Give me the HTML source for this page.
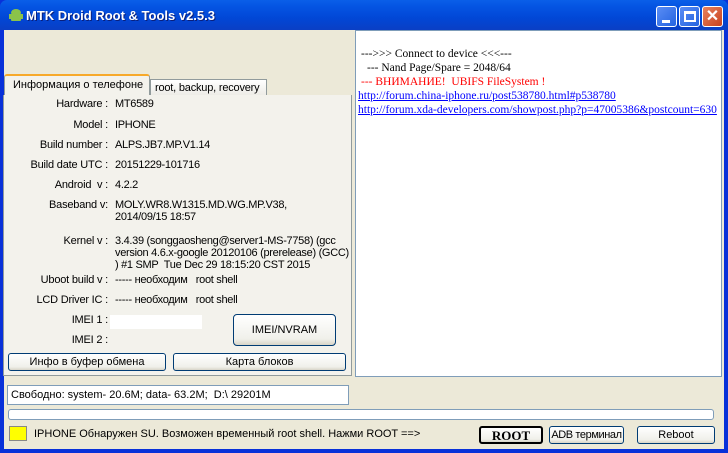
<!DOCTYPE html>
<html><head><meta charset="utf-8"><style>
*{margin:0;padding:0;box-sizing:border-box}
body{width:728px;height:453px;overflow:hidden;background:#0831d9;font-family:"Liberation Sans",sans-serif;font-size:11px;color:#000;position:relative}
.abs{position:absolute}
#title{left:0;top:0;width:728px;height:30px;background:linear-gradient(#0a5fe8,#0555e3 20%,#0147d6 60%,#0a3fc4);border-radius:7px 7px 0 0}
#client{left:4px;top:30px;width:720px;height:419px;background:#ECE9D8}
.tb{top:6px;width:21px;height:21px;border:1px solid #fff;border-radius:3px;background:linear-gradient(135deg,#5a8df5,#2463e0)}
.lbl{position:absolute;width:104px;text-align:right;left:0;white-space:nowrap;letter-spacing:-0.2px}
.val{position:absolute;left:111px;line-height:12px;white-space:nowrap;letter-spacing:-0.3px}
.btn{position:absolute;border:1px solid #003c74;border-radius:3px;background:linear-gradient(#fff,#f0f0ea 80%,#d8d5c8);text-align:center;font-size:11px;white-space:nowrap}
a{color:#00f}
</style></head><body>
<div id="title" class="abs"></div>
<div class="abs" style="left:8px;top:7px;width:16px;height:16px"><svg width="16" height="16"><rect x="3" y="6" width="10" height="8" rx="1" fill="#8bc34a"/><path d="M3 6a5 4 0 0 1 10 0z" fill="#8bc34a"/><rect x="1" y="7" width="2" height="5" fill="#8bc34a"/><rect x="13" y="7" width="2" height="5" fill="#8bc34a"/></svg></div>
<div class="abs" style="left:26px;top:8px;color:#fff;font-weight:bold;font-size:13px;text-shadow:1px 1px #0a1f7a">MTK Droid Root &amp; Tools v2.5.3</div>
<div class="abs tb" style="left:656px"><div class="abs" style="left:5px;top:13px;width:8px;height:3px;background:#fff"></div></div>
<div class="abs tb" style="left:679px"><div class="abs" style="left:4px;top:4px;width:12px;height:11px;border:2px solid #fff;border-top-width:3px"></div></div>
<div class="abs tb" style="left:702px;background:linear-gradient(135deg,#e8825e,#c8421e);color:#fff;font-size:16px;font-weight:bold;text-align:center;line-height:19px">✕</div>
<div id="client" class="abs"></div>
<div class="abs" style="left:4px;top:74px;width:146px;height:22px;background:#f3f2ec;border:1px solid #919b9c;border-bottom:none;border-top:2px solid #f7a92a;border-radius:3px 3px 0 0;padding:3px 0 0 8px;font-size:11px;white-space:nowrap">Информация о телефоне</div>
<div class="abs" style="left:150px;top:79px;width:117px;height:17px;background:linear-gradient(#fff,#ecebe5);border:1px solid #919b9c;border-bottom:none;padding:2px 0 0 4px;white-space:nowrap;letter-spacing:-0.2px">root, backup, recovery</div>
<div class="abs" style="left:3px;top:95px;width:349px;height:281px;background:#f3f2ec;border:1px solid #919b9c;border-top:none"></div>
<div class="abs" style="left:110px;top:315px;width:92px;height:14px;background:#fff"></div>
<div class="abs" style="left:4px;top:0;width:350px;height:453px">
<div class="lbl" style="top:98px">Hardware :</div><div class="val" style="top:98px">MT6589</div>
<div class="lbl" style="top:119px">Model :</div><div class="val" style="top:119px">IPHONE</div>
<div class="lbl" style="top:139px">Build number :</div><div class="val" style="top:139px">ALPS.JB7.MP.V1.14</div>
<div class="lbl" style="top:159px">Build date UTC :</div><div class="val" style="top:159px">20151229-101716</div>
<div class="lbl" style="top:179px">Android&nbsp; v :</div><div class="val" style="top:179px">4.2.2</div>
<div class="lbl" style="top:199px">Baseband v:</div><div class="val" style="top:199px">MOLY.WR8.W1315.MD.WG.MP.V38,<br>2014/09/15 18:57</div>
<div class="lbl" style="top:235px">Kernel v :</div><div class="val" style="top:235px">3.4.39 (songgaosheng@server1-MS-7758) (gcc<br>version 4.6.x-google 20120106 (prerelease) (GCC)<br>) #1 SMP&nbsp; Tue Dec 29 18:15:20 CST 2015</div>
<div class="lbl" style="top:274px">Uboot build v :</div><div class="val" style="top:274px">----- необходим&nbsp;&nbsp; root shell</div>
<div class="lbl" style="top:294px">LCD Driver IC :</div><div class="val" style="top:294px">----- необходим&nbsp;&nbsp; root shell</div>
<div class="lbl" style="top:314px">IMEI 1 :</div>
<div class="lbl" style="top:334px">IMEI 2 :</div>
</div>
<div class="btn" style="left:233px;top:314px;width:103px;height:32px;line-height:30px;border-radius:4px">IMEI/NVRAM</div>
<div class="btn" style="left:8px;top:353px;width:158px;height:18px;line-height:16px">Инфо в буфер обмена</div>
<div class="btn" style="left:173px;top:353px;width:173px;height:18px;line-height:16px">Карта блоков</div>
<div class="abs" style="left:7px;top:385px;width:342px;height:20px;background:#fff;border:1px solid #7f9db9;padding:3px 0 0 3px;white-space:nowrap">Свободно: system- 20.6M; data- 63.2M;&nbsp; D:\ 29201M</div>
<div class="abs" style="left:355px;top:30px;width:367px;height:347px;background:#fff;border:1px solid #7f9db9;font-family:'Liberation Serif',serif;font-size:11.5px;line-height:14px;padding:16px 0 0 2px;white-space:nowrap">
<div style="padding-left:3px">---&gt;&gt;&gt; Connect to device &lt;&lt;&lt;---</div>
<div style="padding-left:9px">--- Nand Page/Spare = 2048/64</div>
<div style="padding-left:3px;color:#f00">--- ВНИМАНИЕ!&nbsp; UBIFS FileSystem !</div>
<div><a href="#">http://forum.china-iphone.ru/post538780.html#p538780</a></div>
<div><a href="#">http://forum.xda-developers.com/showpost.php?p=47005386&amp;postcount=630</a></div>
</div>
<div class="abs" style="left:8px;top:409px;width:706px;height:11px;background:#fff;border:1px solid #7f9db9;border-radius:3px"></div>
<div class="abs" style="left:9px;top:426px;width:18px;height:15px;background:#ff0;border:1px solid #888"></div>
<div class="abs" style="left:34px;top:428px;white-space:nowrap">IPHONE Обнаружен SU. Возможен временный root shell. Нажми ROOT ==&gt;</div>
<div class="btn" style="left:479px;top:426px;width:64px;height:18px;line-height:15px;font-family:'Liberation Serif',serif;font-weight:bold;font-size:13px;border:2px solid #000">ROOT</div>
<div class="btn" style="left:549px;top:426px;width:75px;height:18px;line-height:16px;letter-spacing:-0.4px">ADB терминал</div>
<div class="btn" style="left:637px;top:426px;width:78px;height:18px;line-height:16px">Reboot</div>
</body></html>
